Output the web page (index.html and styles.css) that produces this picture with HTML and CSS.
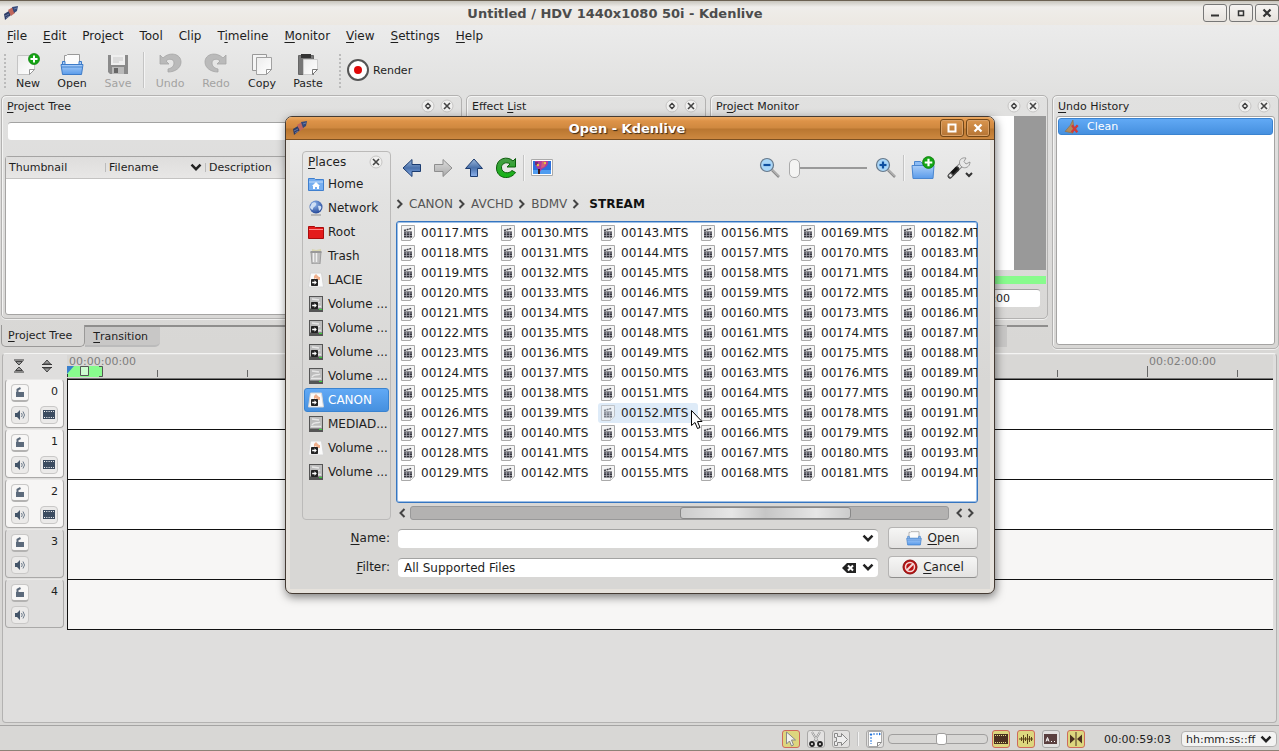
FILE: index.html
```html
<!DOCTYPE html>
<html lang="en">
<head>
    <meta charset="UTF-8">
    <meta name="viewport" content="width=device-width, initial-scale=1.0">
    <title>Untitled / HDV 1440x1080 50i - Kdenlive</title>
    <link rel="stylesheet" href="styles.css">
</head>
<body>
    <!-- shared icons -->
    <svg class="sprite" width="0" height="0" aria-hidden="true">
        <defs>
            <linearGradient id="g-blue" x1="0" y1="0" x2="0" y2="1"><stop offset="0" stop-color="#a9cdf8"/><stop offset="1" stop-color="#5a9bea"/></linearGradient>
            <linearGradient id="g-arrow" x1="0" y1="0" x2="0" y2="1"><stop offset="0" stop-color="#9cb9dc"/><stop offset="0.5" stop-color="#4a71ab"/><stop offset="1" stop-color="#8cb2ee"/></linearGradient>
            <linearGradient id="g-grey" x1="0" y1="0" x2="0" y2="1"><stop offset="0" stop-color="#dcdcdc"/><stop offset="1" stop-color="#a9a9a9"/></linearGradient>
            <linearGradient id="g-paper" x1="0" y1="0" x2="1" y2="1"><stop offset="0" stop-color="#ececec"/><stop offset="1" stop-color="#ffffff"/></linearGradient>
            <linearGradient id="g-green" x1="0" y1="0" x2="0" y2="1"><stop offset="0" stop-color="#4a9a4a"/><stop offset="1" stop-color="#12b512"/></linearGradient>
            <radialGradient id="g-globe" cx="0.4" cy="0.3" r="0.8"><stop offset="0" stop-color="#8fb6ee"/><stop offset="1" stop-color="#173a8c"/></radialGradient>
        </defs>
        <symbol id="i-app" viewBox="0 0 16 16"><path d="M1 9l5-3 2 4-6 5z" fill="#2d3c66"/><path d="M5 5l5-3 2 6-4 3z" fill="#c0675c"/><path d="M9 2l6-1-1 5-3 2z" fill="#34497a"/><path d="M2 11l4-2M3 13l3-2M11 4l3-1" stroke="#7787b0" stroke-width="0.8"/></symbol>
        <symbol id="i-plus" viewBox="0 0 12 12"><circle cx="6" cy="6" r="5.5" fill="#14a514" stroke="#0c7a0c" stroke-width="0.7"/><path d="M6 2.5v7M2.5 6h7" stroke="#fff" stroke-width="2"/></symbol>
        <symbol id="i-new" viewBox="0 0 24 24"><path d="M1.500 3.500h17v14l-5 5h-12z" fill="url(#g-paper)" stroke="#c4c4c4"/><path d="M18.500 17.500h-5v5z" fill="#fff" stroke="#999"/><use href="#i-plus" x="12" y="1" width="12" height="12"/></symbol>
        <symbol id="i-open" viewBox="0 0 24 24"><path d="M4.500 3.500h2l1-1h12v11h-15z" fill="#fbfbfb" stroke="#999"/><path d="M2.500 9.500v5h19v-5h-2.500v3h-14v-3z" fill="#a9cdf8" stroke="#3d7bc8"/><path d="M1 12.500h22l-1.500 10h-19z" fill="url(#g-blue)" stroke="#3d7bc8"/><path d="M2 15h20" stroke="#4583cf"/></symbol>
        <symbol id="i-save" viewBox="0 0 24 24"><path d="M2 3h20v19h-18l-2-2z" fill="#8a8a8a"/><rect x="5" y="3" width="14" height="10" fill="#efefef"/><path d="M7 6h10M7 8h10M7 10h6" stroke="#c9c9c9"/><rect x="6" y="15" width="12" height="7" fill="#b9b9b9"/><rect x="8" y="16" width="4" height="5" fill="#666"/></symbol>
        <symbol id="i-undo" viewBox="0 0 24 24"><path d="M2 3v9h9l-3-3c3-3 8-2 8 2 0 3-2 5-6 6v3c7 0 13-4 13-10 0-8-11-11-18-4z" fill="#bababa" stroke="#a6a6a6" stroke-width="0.8"/></symbol>
        <symbol id="i-copy" viewBox="0 0 24 24"><path d="M2.500 2.500h14v16h-14z" fill="#f4f4f4" stroke="#999"/><path d="M6.500 5.500h15v12l-5 5h-10z" fill="url(#g-paper)" stroke="#a2a2a2"/><path d="M21.500 17.500h-5v5z" fill="#fff" stroke="#999"/></symbol>
        <symbol id="i-paste" viewBox="0 0 24 24"><path d="M2.500 3.500h15v19h-15z" fill="#777" stroke="#666"/><path d="M5 2h10v4h-10z" fill="#333"/><path d="M7.500 7.500h14v10l-5 5h-9z" fill="url(#g-paper)" stroke="#ccc"/><path d="M21.500 17.500h-5v5z" fill="#fff" stroke="#777"/></symbol>
        <symbol id="i-render" viewBox="0 0 24 24"><circle cx="12" cy="12" r="10" fill="#fff" stroke="#555" stroke-width="2"/><circle cx="12" cy="12" r="4" fill="#e00808"/></symbol>
        <symbol id="i-float" viewBox="0 0 14 14"><circle cx="7" cy="7" r="6" fill="#f0f0ef" stroke="#c6c5c4"/><path d="M7 3.500l2.500 2.500h-5zM7 10.500l2.500-2.500h-5z" fill="#444"/><path d="M4.500 7l2.500-2.500 2.500 2.500-2.500 2.500z" fill="none" stroke="#444" stroke-width="1.200"/></symbol>
        <symbol id="i-close" viewBox="0 0 14 14"><circle cx="7" cy="7" r="6" fill="#f0f0ef" stroke="#c6c5c4"/><path d="M4 4l6 6M10 4l-6 6" stroke="#444" stroke-width="1.600"/></symbol>
        <symbol id="i-down" viewBox="0 0 10 8"><path d="M1 1.500l4 4 4-4" fill="none" stroke="#222" stroke-width="2.200"/></symbol>
        <symbol id="i-gt" viewBox="0 0 8 10"><path d="M1.500 1l4 4-4 4" fill="none" stroke="#444" stroke-width="2"/></symbol>
        <symbol id="i-broom" viewBox="0 0 18 16"><path d="M10 0l-3 6-6 7 9 2 1-8z" fill="#b08a5c" stroke="#8a6840" stroke-width="0.600"/><path d="M9 6l6 8M15.500 6l-7 8" stroke="#cf3a3a" stroke-width="2.600"/></symbol>
        <symbol id="i-left" viewBox="0 0 20 20"><path d="M1 10l9-8.500v5h8.500v7h-8.500v5z" fill="url(#g-arrow)" stroke="#1c3c70"/></symbol>
        <symbol id="i-right" viewBox="0 0 20 20"><path d="M19 10l-9-8.500v5h-8.500v7h8.500v5z" fill="url(#g-grey)" stroke="#8e8e8e"/></symbol>
        <symbol id="i-up" viewBox="0 0 20 20"><path d="M10 1l8.500 9.500h-5v8h-7v-8h-5z" fill="url(#g-arrow)" stroke="#1c3c70"/></symbol>
        <symbol id="i-reload" viewBox="0 0 22 22"><path d="M20.500 1.500v8.500h-8.500l3-3c-4-3-9 0-8.500 4 .5 5 7 6.500 10.500 2.500l3.500 2c-5 8-19 6.500-19-4.500 0-10 11-12.500 16.500-7z" fill="url(#g-green)" stroke="#0b5f0b"/></symbol>
        <symbol id="i-preview" viewBox="0 0 22 18"><path d="M0.500 0.500h21v16h-21z" fill="#fff" stroke="#aaa"/><path d="M2 2h18v13h-18z" fill="#2b6fdc"/><path d="M2 11h18v4h-18z" fill="#4f9cf0"/><path d="M4 2h13c1 4-2 6-6 8l-3 4-1-4c-2-2-3-4-3-8z" fill="#b03a9b"/><path d="M11 2c4 0 5 3 2 6l-3 1z" fill="#d0607a"/><path d="M4 3h3v3h-3z" fill="#6b2b78"/><circle cx="7" cy="6" r="1.200" fill="#e8c040"/><circle cx="14" cy="4" r="1.200" fill="#e8c040"/><path d="M8 10v5" stroke="#3b1a1a" stroke-width="2"/></symbol>
        <symbol id="i-lens" viewBox="0 0 22 22"><path d="M13 13l7 7" stroke="#8b8b8b" stroke-width="2.500"/><path d="M13.500 13l6.500 6.500" stroke="#ddd" stroke-width="0.800"/><circle cx="8" cy="8" r="6.500" fill="#a9d6f7" stroke="#66788a" stroke-width="1.200"/><path d="M4.500 8h7" stroke="#0e4fa0" stroke-width="2.200"/></symbol>
        <symbol id="i-zoomin" viewBox="0 0 22 22"><use href="#i-lens" width="22" height="22"/><path d="M8 4.500v7" stroke="#0e4fa0" stroke-width="2.200"/></symbol>
        <symbol id="i-newfolder" viewBox="0 0 24 24"><path d="M3.500 5.500h6l2 2h9v13h-17z" fill="#8dbcf4" stroke="#4a86cf"/><path d="M1 9.500h22l-1 13h-20z" fill="url(#g-blue)" stroke="#4a86cf"/><use href="#i-plus" x="11" y="0" width="13" height="13"/></symbol>
        <symbol id="i-wrench" viewBox="0 0 28 24"><path d="M10 14l7-7" stroke="#888" stroke-width="5"/><path d="M10.500 13.500l7-7" stroke="#e4e4e4" stroke-width="3"/><path d="M14 9c-2-5 2-8 6-7l-2 3.500 2 2.500 4-2c0 5-5 7-8 5z" fill="#e8e8e8" stroke="#888" stroke-width="0.800"/><path d="M4 20l7-7" stroke="#333" stroke-width="5" stroke-linecap="round"/><path d="M6 17l5-5" stroke="#111" stroke-width="3"/><circle cx="4.500" cy="19.500" r="2" fill="#ddd" stroke="#555"/><path d="M20 17l3 3 3-3" stroke="#333" stroke-width="2" fill="none"/></symbol>
        <symbol id="i-home" viewBox="0 0 16 16"><path d="M0.500 2.500h6l1 1h8v11h-15z" fill="#76aef0" stroke="#3f7fce"/><path d="M1 6h14" stroke="#c4ddfa"/><path d="M8 6l4 4h-1v3h-2v-2h-2v2h-2v-3h-1z" fill="#fff"/></symbol>
        <symbol id="i-globe" viewBox="0 0 16 16"><path d="M3 15h10" stroke="#aaa" stroke-width="1.500"/><circle cx="8" cy="7" r="6.500" fill="url(#g-globe)"/><path d="M4 3c3-2 5 0 4 2s-3 2-3 4-3 0-3-2zM10 6c3-1 4 1 3 3l-2 2z" fill="#cfdff5"/></symbol>
        <symbol id="i-root" viewBox="0 0 16 16"><path d="M0.500 2.500h6l1 1h8v11h-15z" fill="#e41b1b" stroke="#a90c0c"/><path d="M1 5.500h14" stroke="#ff8c8c"/></symbol>
        <symbol id="i-trash" viewBox="0 0 16 16"><path d="M3 4h10l-1 12h-8z" fill="#bdbdbd" stroke="#909090" stroke-width="0.800"/><path d="M5.500 5v9M8.500 5v9" stroke="#efefef" stroke-width="1.500"/><path d="M2.500 4h11" stroke="#999" stroke-width="2"/><path d="M4 1l4 1 5-1v2h-9z" fill="#d8d5b0"/></symbol>
        <symbol id="i-mount" viewBox="0 0 9 9"><rect width="9" height="9" rx="1" fill="#222"/><path d="M1.500 3.500h3v-2l3 3-3 3v-2h-3z" fill="#fff"/></symbol>
        <symbol id="i-usb" viewBox="0 0 16 16"><path d="M2.500 1h11l2 14h-15z" fill="#fafafa" stroke="#d6d6d6"/><path d="M8 2l3 3h1v3h-3l-1-2-2 1v-3z" fill="#f0b08c"/><use href="#i-mount" x="3" y="7" width="7" height="7"/></symbol>
        <symbol id="i-drive" viewBox="0 0 16 16"><rect x="1.500" y="0.500" width="13" height="15" fill="#bcbcbc" stroke="#555"/><path d="M4 3l7 1M4 9c2-4 5-1 8-3M3 10.500h10" stroke="#e6e6e6" stroke-width="1.500" fill="none"/><rect x="2" y="12.500" width="12" height="2.500" fill="#555"/><path d="M11 13.500h3" stroke="#39d939"/></symbol>
        <symbol id="i-mdrive" viewBox="0 0 16 16"><use href="#i-drive" width="16" height="16"/><use href="#i-mount" x="3" y="6" width="7" height="7"/></symbol>
        <symbol id="i-video" viewBox="0 0 16 16"><path d="M1.500 0.500h13v11l-4 4h-9z" fill="#f4f4f4" stroke="#aaa"/><path d="M14.500 11.500l-4 4v-3z" fill="#fff" stroke="#bbb" stroke-width="0.800"/><path d="M4 6.500h8v6h-8z" fill="#34343c"/><path d="M4 5.500l7.500-2" stroke="#44444c" stroke-width="1.500" stroke-dasharray="2 0.700"/><path d="M4 8h8M4 10.500h8M6.500 7v5.500M9.500 7v5.500" stroke="#b5b5bb" stroke-width="0.700"/></symbol>
        <symbol id="i-cancel" viewBox="0 0 16 16"><circle cx="8" cy="8" r="7" fill="#b81414" stroke="#8b0d0d"/><circle cx="8" cy="8" r="4.500" fill="none" stroke="#f4dada" stroke-width="1.500"/><path d="M5 11l6-6" stroke="#f4dada" stroke-width="1.800"/></symbol>
        <symbol id="i-clear" viewBox="0 0 14 12"><path d="M0 6l5-5h9v10h-9z" fill="#222"/><path d="M6 3.500l5 5M11 3.500l-5 5" stroke="#fff" stroke-width="2"/></symbol>
        <symbol id="i-lock" viewBox="0 0 12 12"><path d="M2 6h8v5h-8z" fill="#5d6b7c"/><path d="M3.500 6v-2.500l3-1.500" fill="none" stroke="#5d6b7c" stroke-width="2"/></symbol>
        <symbol id="i-sound" viewBox="0 0 12 12"><path d="M1 4h2l3-3v10l-3-3h-2z" fill="#435468"/><path d="M7.500 4q1.500 2 0 4M9 2.500q3 3.500 0 7" fill="none" stroke="#6d7b8b"/></symbol>
        <symbol id="i-film" viewBox="0 0 12 9"><rect width="12" height="9" fill="#3c4c60"/><path d="M1 1.500h10M1 7.500h10" stroke="#fff" stroke-dasharray="1 1.300"/></symbol>
    </svg>

    <div class="window">
        <header class="titlebar">
            <svg class="ic16"><use href="#i-app"/></svg>
            <h1>Untitled / HDV 1440x1080 50i - Kdenlive</h1>
            <div class="win-buttons">
                <button aria-label="Minimize"><svg width="10" height="10"><path d="M1 7.500h8" stroke="#333" stroke-width="2"/></svg></button>
                <button aria-label="Maximize"><svg width="10" height="10"><path d="M2.500 3h5v4.500h-5z" fill="none" stroke="#333" stroke-width="1.500"/></svg></button>
                <button aria-label="Close"><svg width="10" height="10"><path d="M1.500 1.500l7 7M8.500 1.500l-7 7" stroke="#333" stroke-width="2.200"/></svg></button>
            </div>
        </header>

        <nav class="menubar">
            <button><u>F</u>ile</button>
            <button><u>E</u>dit</button>
            <button>Pro<u>j</u>ect</button>
            <button>Tool</button>
            <button>Clip</button>
            <button>T<u>i</u>meline</button>
            <button><u>M</u>onitor</button>
            <button><u>V</u>iew</button>
            <button><u>S</u>ettings</button>
            <button><u>H</u>elp</button>
        </nav>

        <div class="toolbar">
            <span class="grip"></span>
            <button class="tool narrow"><svg><use href="#i-new"/></svg>New</button>
            <button class="tool"><svg><use href="#i-open"/></svg>Open</button>
            <button class="tool" disabled><svg><use href="#i-save"/></svg>Save</button>
            <span class="sep"></span>
            <button class="tool" disabled><svg><use href="#i-undo"/></svg>Undo</button>
            <button class="tool" disabled><svg class="flip"><use href="#i-undo"/></svg>Redo</button>
            <button class="tool"><svg><use href="#i-copy"/></svg>Copy</button>
            <button class="tool"><svg><use href="#i-paste"/></svg>Paste</button>
            <span class="grip"></span>
            <button class="tool-render"><svg><use href="#i-render"/></svg>Render</button>
        </div>

        <main class="docks">
            <div class="dock-area">
                <div class="dock-row">
                    <section class="dock tree-dock">
                        <div class="dock-title"><h2><u>P</u>roject Tree</h2><button aria-label="Float"><svg><use href="#i-float"/></svg></button><button aria-label="Close"><svg><use href="#i-close"/></svg></button></div>
                        <input class="search" type="text" aria-label="Search clips">
                        <div class="tree">
                            <table>
                                <thead>
                                    <tr><th>Thumbnail</th><th>Filename <svg width="12" height="9"><use href="#i-down"/></svg></th><th>Description</th></tr>
                                </thead>
                            </table>
                        </div>
                    </section>
                    <section class="dock effect-dock">
                        <div class="dock-title"><h2>Effect <u>L</u>ist</h2><button aria-label="Float"><svg><use href="#i-float"/></svg></button><button aria-label="Close"><svg><use href="#i-close"/></svg></button></div>
                    </section>
                    <section class="dock monitor-dock">
                        <div class="dock-title"><h2>Pr<u>o</u>ject Monitor</h2><button aria-label="Float"><svg><use href="#i-float"/></svg></button><button aria-label="Close"><svg><use href="#i-close"/></svg></button></div>
                        <div class="screen"></div>
                        <div class="zone"></div>
                        <input class="timecode" type="text" value="00:00:00:00" aria-label="Position">
                    </section>
                </div>
                <div class="tabs">
                    <button class="tab active"><u>P</u>roject Tree</button>
                    <button class="tab"><u>T</u>ransition</button>
                    <span class="tab-rest"></span>
                    <span class="tab-end"></span>
                </div>
            </div>
            <section class="dock undo-dock">
                <div class="dock-title"><h2><u>U</u>ndo History</h2><button aria-label="Float"><svg><use href="#i-float"/></svg></button><button aria-label="Close"><svg><use href="#i-close"/></svg></button></div>
                <ul class="history">
                    <li><svg width="18" height="14"><use href="#i-broom"/></svg>Clean</li>
                </ul>
            </section>
        </main>

        <section class="timeline">
            <div class="heads">
                <div class="sizers">
                    <button aria-label="Shrink tracks"><svg width="12" height="14"><path d="M1 1h10M1 13h10" stroke="#333"/><path d="M2.500 2.500h7l-3.500 3.500zM2.500 11.500h7l-3.500-3.500z" fill="#999" stroke="#444"/></svg></button>
                    <button aria-label="Grow tracks"><svg width="12" height="14"><path d="M1 5.500h10M1 8.500h10" stroke="#333"/><path d="M2.500 5h7l-3.500-4zM2.500 9h7l-3.500 4z" fill="#999" stroke="#444"/></svg></button>
                </div>
                <div id="heads"></div>
            </div>
            <div class="lanes">
                <div class="ruler">
                    <div class="ruler-labels"><span>00:00:00:00</span><span>00:02:00:00</span></div>
                    <div class="ticks">
                        <svg width="36" height="11"><path d="M0 0h36v11h-36z" fill="#88fb8d"/><path d="M0 0h7l-7 8z" fill="#3a80cc"/><path d="M0.500 8v3" stroke="#333"/><path d="M13.500 0.500h8v9h-8z" fill="#cdfcd0" stroke="#555"/><path d="M32 0.500h3.500v10h-3.500" fill="none" stroke="#555"/></svg>
                        <span class="long-tick"></span>
                    </div>
                </div>
                <div id="lanes"></div>
            </div>
        </section>

        <footer class="statusbar">
            <button class="mode on" aria-label="Selection tool"><svg width="14" height="16"><path d="M2.500 1v12l3-3 2 5 2-1-2-5h4z" fill="#f2f2ec" stroke="#888"/></svg></button>
            <button class="mode" aria-label="Razor tool"><svg width="16" height="16"><path d="M4 1l6 10M12 1l-6 10" stroke="#888" stroke-width="2"/><path d="M4 1l6 10M12 1l-6 10" stroke="#f4f4f4" stroke-width="0.800"/><circle cx="4" cy="13" r="2" fill="none" stroke="#222" stroke-width="1.800"/><circle cx="12" cy="13" r="2" fill="none" stroke="#222" stroke-width="1.800"/></svg></button>
            <button class="mode" aria-label="Spacer tool"><svg width="16" height="16"><path d="M1.500 2.500h3v3h4v-3l6 6-6 6v-3h-4v3h-3v-4h2v-4h-2z" fill="#eee" stroke="#888"/></svg></button>
            <span class="sep"></span>
            <button class="mode" aria-label="Fit zoom"><svg width="16" height="16"><path d="M1.500 0.500h13v11l-4 4h-9z" fill="#fff" stroke="#aaa"/><path d="M14.500 11.500h-4v4" fill="none" stroke="#888"/><path d="M4 3v10M6 3h7" stroke="#1d6fd8" stroke-dasharray="2 1"/><path d="M2.500 4l1.500-2 1.500 2zM12 1.500l2 1.500-2 1.500z" fill="#1d6fd8"/></svg></button>
            <input class="zoom" type="range" min="0" max="13" value="7" aria-label="Timeline zoom">
            <button class="mode on" aria-label="Show video thumbnails"><svg width="14" height="10"><rect width="14" height="10" fill="#4a3020"/><path d="M1 1.500h12M1 8.500h12" stroke="#e3dc86" stroke-dasharray="1 1"/></svg></button>
            <button class="mode on" aria-label="Show audio thumbnails"><svg width="14" height="12"><path d="M0 6h14M2.500 4v4M4.500 2v8M6.500 4v4M8.500 1v10M10.500 3v6M12.500 4v4" stroke="#5a4018"/></svg></button>
            <button class="mode" aria-label="Show markers"><svg width="13" height="10"><rect width="13" height="10" fill="#5a4040"/><path d="M2 7.500l1.500-4 1.500 4M2.500 6h2M7 7.500h1M10 7.500h1" stroke="#fff" fill="none"/></svg></button>
            <button class="mode on" aria-label="Snap"><svg width="14" height="14"><path d="M7 0v14" stroke="#4a3020"/><path d="M1 2.500l5 4.500-5 4.500zM13 2.500l-5 4.500 5 4.500z" fill="#4a3020"/></svg></button>
            <span class="duration">00:00:59:03</span>
            <span class="pick format"><select aria-label="Timecode format"><option>hh:mm:ss::ff</option></select><svg width="12" height="9"><use href="#i-down"/></svg></span>
        </footer>
    </div>

    <div class="dialog" role="dialog" aria-labelledby="dialog-title">
        <div class="dialog-bar">
            <svg class="ic16"><use href="#i-app"/></svg>
            <h2 id="dialog-title">Open - Kdenlive</h2>
            <div class="win-buttons">
                <button aria-label="Maximize"><svg width="12" height="10"><path d="M2.500 1.500h7v7h-7z" fill="none" stroke="#fff" stroke-width="2"/></svg></button>
                <button aria-label="Close"><svg width="10" height="10"><path d="M1.500 1.500l7 7M8.500 1.500l-7 7" stroke="#fff" stroke-width="2.200"/></svg></button>
            </div>
        </div>
        <div class="dialog-body">
            <div class="browser">
                <aside class="places">
                    <div class="places-title"><h3><u>P</u>laces</h3><button aria-label="Close"><svg><use href="#i-close"/></svg></button></div>
                    <ul>
                        <li><svg><use href="#i-home"/></svg>Home</li>
                        <li><svg><use href="#i-globe"/></svg>Network</li>
                        <li><svg><use href="#i-root"/></svg>Root</li>
                        <li><svg><use href="#i-trash"/></svg>Trash</li>
                        <li><svg><use href="#i-usb"/></svg>LACIE</li>
                        <li><svg><use href="#i-mdrive"/></svg>Volume ...</li>
                        <li><svg><use href="#i-mdrive"/></svg>Volume ...</li>
                        <li><svg><use href="#i-mdrive"/></svg>Volume ...</li>
                        <li><svg><use href="#i-drive"/></svg>Volume ...</li>
                        <li class="selected"><svg><use href="#i-usb"/></svg>CANON</li>
                        <li><svg><use href="#i-drive"/></svg>MEDIAD...</li>
                        <li><svg><use href="#i-usb"/></svg>Volume ...</li>
                        <li><svg><use href="#i-mdrive"/></svg>Volume ...</li>
                    </ul>
                </aside>
                <div class="pane">
                    <div class="nav">
                        <button aria-label="Back"><svg width="20" height="20"><use href="#i-left"/></svg></button>
                        <button aria-label="Forward" disabled><svg width="20" height="20"><use href="#i-right"/></svg></button>
                        <button aria-label="Parent folder"><svg width="20" height="20"><use href="#i-up"/></svg></button>
                        <button aria-label="Reload"><svg width="22" height="22"><use href="#i-reload"/></svg></button>
                        <span class="sep"></span>
                        <button aria-label="Show preview"><svg width="22" height="18"><use href="#i-preview"/></svg></button>
                        <span class="fill"></span>
                        <button aria-label="Zoom out"><svg width="22" height="22"><use href="#i-lens"/></svg></button>
                        <input class="icon-size" type="range" value="0" aria-label="Icon size">
                        <button aria-label="Zoom in"><svg width="22" height="22"><use href="#i-zoomin"/></svg></button>
                        <span class="sep"></span>
                        <button aria-label="New folder"><svg width="24" height="24"><use href="#i-newfolder"/></svg></button>
                        <button aria-label="Options"><svg width="28" height="24"><use href="#i-wrench"/></svg></button>
                    </div>
                    <nav class="crumbs">
                        <svg><use href="#i-gt"/></svg><a href="#">CANON</a>
                        <svg><use href="#i-gt"/></svg><a href="#">AVCHD</a>
                        <svg><use href="#i-gt"/></svg><a href="#">BDMV</a>
                        <svg><use href="#i-gt"/></svg><a href="#" class="current">STREAM</a>
                    </nav>
                    <ul class="files" id="files"></ul>
                    <div class="scrollbar">
                        <button aria-label="Scroll left"><svg class="flip"><use href="#i-gt"/></svg></button>
                        <div class="track"><div class="thumb"></div></div>
                        <button aria-label="Scroll left"><svg class="flip"><use href="#i-gt"/></svg></button>
                        <button aria-label="Scroll right"><svg><use href="#i-gt"/></svg></button>
                    </div>
                </div>
            </div>
            <form class="fields">
                <label for="name"><u>N</u>ame:</label>
                <span class="pick"><input id="name" type="text"><svg width="12" height="9"><use href="#i-down"/></svg></span>
                <button type="button" class="push"><svg><use href="#i-open"/></svg><span><u>O</u>pen</span></button>
                <label for="filter"><u>F</u>ilter:</label>
                <span class="pick"><select id="filter"><option>All Supported Files</option></select><svg width="14" height="12"><use href="#i-clear"/></svg><svg width="12" height="9"><use href="#i-down"/></svg></span>
                <button type="button" class="push"><svg><use href="#i-cancel"/></svg><span><u>C</u>ancel</span></button>
            </form>
        </div>
        <svg class="pointer" width="14" height="22"><path d="M1.500 1.500v15l3.500-3 2.500 6 2.500-1-2.500-6h4.500z" fill="#fff" stroke="#000"/></svg>
    </div>

    <script>
        // clips on the card
        var files = document.getElementById('files');
        for (var i = 117; i <= 194; i++) {
            var li = document.createElement('li');
            if (i === 152) {
                li.className = 'hover';
            }
            li.innerHTML = '<svg><use href="#i-video"/></svg>00' + i + '.MTS';
            files.appendChild(li);
        }

        // tracks 0-2 are video, 3-4 are audio
        var heads = document.getElementById('heads');
        var lanes = document.getElementById('lanes');
        for (var t = 0; t < 5; t++) {
            var video = t < 3;
            heads.innerHTML += '<div class="head' + (video ? '' : ' audio') + '">' +
                '<button class="lock" aria-label="Lock track"><svg width="12" height="12"><use href="#i-lock"/></svg></button>' +
                '<span>' + t + '</span>' +
                '<button aria-label="Mute track"><svg width="12" height="12"><use href="#i-sound"/></svg></button>' +
                (video ? '<button aria-label="Hide track"><svg width="12" height="9"><use href="#i-film"/></svg></button>' : '') +
                '</div>';
            lanes.innerHTML += '<div class="lane' + (video ? '' : ' audio') + '"></div>';
        }
    </script>
</body>
</html>
```

FILE: styles.css
```css
* {
    box-sizing: border-box;
}

body {
    margin: 0;
    font-family: "DejaVu Sans", sans-serif;
    font-size: 12px;
    color: #1e1e1e;
    background-color: #d8d7d5;
}

h1, h2, h3, ul {
    margin: 0;
    padding: 0;
    font-size: 11px;
    font-weight: normal;
    list-style: none;
}

button, input, select {
    font: inherit;
    color: inherit;
    margin: 0;
    padding: 0;
    border: 0;
    background: none;
}

button {
    display: flex;
    align-items: center;
    justify-content: center;
}

svg {
    display: block;
    flex: none;
}

u {
    text-decoration: underline;
    text-underline-offset: 2px;
}

.sprite {
    position: absolute;
}

.flip {
    transform: scaleX(-1);
}

.ic16 {
    width: 16px;
    height: 16px;
}

.sep {
    width: 2px;
    align-self: stretch;
    background: linear-gradient(90deg, #c4c4c4 50%, #f4f4f4 50%);
}

/* main window */
.window {
    display: flex;
    flex-direction: column;
    min-height: 100vh;
    border-top: 1px solid #6b6152;
    border-bottom: 1px solid #8d8277;
    background: linear-gradient(#ececec 20px, #e1e1e0 90px, #dcdbda 240px, #d8d7d5 340px);
}

.titlebar {
    display: flex;
    align-items: center;
    height: 24px;
    padding: 0 0 0 3px;
    background: linear-gradient(#c8c5bd, #efedea 6px, #ece8e2);
}

.titlebar h1, .dialog-bar h2 {
    flex: 1;
    text-align: center;
    font-size: 13px;
    font-weight: bold;
}

.titlebar h1 {
    padding-left: 8px;
    color: #4c4c4c;
}

.win-buttons {
    display: flex;
    gap: 2px;
}

.win-buttons button {
    width: 24px;
    height: 18px;
    border: 1px solid #777;
    border-radius: 3px;
    background: linear-gradient(#f6f4f2, #e6e2dd);
}

.menubar {
    display: flex;
    gap: 16px;
    height: 22px;
    padding-left: 7px;
}

.menubar button {
    display: block;
}

.toolbar {
    display: flex;
    height: 48px;
    padding: 5px 0 7px 3px;
}

.toolbar .sep {
    margin: 0 2px;
}

.grip {
    width: 4px;
    margin-top: 1px;
    background-image: radial-gradient(#bbb 1px, transparent 1px);
    background-size: 4px 4px;
}

.tool {
    flex-direction: column;
    justify-content: flex-start;
    width: 46px;
    font-size: 11px;
    line-height: 16px;
}

.tool.narrow {
    width: 42px;
}

.tool svg, .tool-render svg {
    width: 24px;
    height: 24px;
}

.tool:disabled {
    color: #a3a2a1;
}

.toolbar .grip + .tool-render {
    gap: 3px;
    margin-left: 4px;
    font-size: 11px;
}

.tool + .grip {
    margin-left: 7px;
}

/* docks */
.docks {
    display: flex;
    gap: 4px;
    height: 254px;
    padding-left: 1px;
}

.dock-area {
    flex: 1;
    display: flex;
    flex-direction: column;
}

.dock-row {
    flex: 1;
    display: flex;
    gap: 4px;
}

.dock {
    display: flex;
    flex-direction: column;
    padding: 0 3px;
    border: 1px solid #b3b2b1;
    border-radius: 5px;
    box-shadow: inset 1px 1px 0 #f4f4f3, 0 1px 0 #f0f0ef;
}

.tree-dock {
    flex: 1;
}

.effect-dock {
    width: 240px;
}

.monitor-dock {
    width: 338px;
    padding: 0 1px;
}

.undo-dock {
    width: 227px;
}

.dock-title {
    display: flex;
    align-items: center;
    gap: 5px;
    height: 20px;
    padding: 0 4px 0 2px;
}

.monitor-dock .dock-title {
    padding: 0 6px 0 4px;
}

.dock-title h2 {
    flex: 1;
}

.dock-title svg, .places-title svg {
    width: 14px;
    height: 14px;
}

.search, .timecode {
    height: 18px;
    border-top: 1px solid #a3a3a2;
    border-radius: 3px;
    background-color: #fff;
}

.search {
    margin: 6px 4px 16px 3px;
}

.tree {
    flex: 1;
    margin-bottom: 3px;
    border: 1px solid #a5a4a3;
    border-radius: 3px;
    background-color: #fff;
}

.tree table {
    width: 100%;
    table-layout: fixed;
    border-collapse: collapse;
    background: linear-gradient(#dedddc, #e8e7e6);
}

.tree th {
    height: 21px;
    padding: 0 4px 0 3px;
    text-align: left;
    font-size: 11px;
    font-weight: normal;
    border-bottom: 1px solid #c4c3c2;
}

.tree th:not(:last-child) {
    width: 100px;
    background: linear-gradient(transparent 6px, #bbb 6px, #bbb 15px, transparent 15px) right / 1px 100% no-repeat;
}

.tree th svg {
    float: right;
    margin-top: 2px;
}

.screen {
    flex: 1;
    border: solid #999;
    border-width: 0 32px;
    background-color: #fff;
}

.zone {
    height: 8px;
    margin-top: 6px;
    background-color: #88fb8d;
}

.timecode {
    align-self: flex-end;
    width: 103px;
    margin: 5px 6px 11px 0;
    padding-left: 6px;
    font-size: 11px;
}

.tabs {
    display: flex;
    height: 30px;
    padding: 6px 0 2px;
}

.tab {
    padding: 0 12px 0 8px;
    font-size: 11px;
    border-top: 2px solid #8f8e8d;
    border-bottom: 2px solid #bbb;
    border-radius: 0 0 5px 0;
    background-color: #c8c7c6;
}

.tab.active {
    padding: 0 12px 0 6px;
    border: solid #9a9998;
    border-width: 0 1px 1px;
    border-radius: 0 0 5px 5px;
    background: none;
}

.tab-rest {
    flex: 1;
    border-top: 2px solid #8f8e8d;
    border-right: 22px solid #c8c7c6;
}

.tab-end {
    width: 41px;
    border-top: 2px solid #8f8e8d;
}

.history {
    flex: 1;
    margin-bottom: 3px;
    padding: 1px;
    border: 1px solid #a5a4a3;
    border-radius: 3px;
    background-color: #fff;
}

.history li {
    display: flex;
    align-items: center;
    gap: 6px;
    height: 17px;
    padding-left: 4px;
    font-size: 11px;
}

.history li, .places .selected {
    color: #fff;
    border: 1px solid #3a83d0;
    border-radius: 3px;
    background: linear-gradient(#61a9f5, #4690df);
}

/* timeline */
.timeline {
    flex: 1;
    display: flex;
    gap: 3px;
    margin: 4px 2px 2px;
    padding: 1px 3px 3px 2px;
    border: 1px solid #b3b2b1;
    border-top-color: #f4f4f3;
    border-radius: 4px;
    background-color: #dfdedd;
}

.heads {
    flex: none;
    width: 59px;
}

.sizers {
    display: flex;
    gap: 16px;
    height: 24px;
    padding: 0 0 2px 8px;
}

.head {
    display: grid;
    grid-template-columns: 18px 1fr 18px;
    grid-template-rows: 18px 18px;
    gap: 4px 0;
    align-content: center;
    height: 49px;
    margin-bottom: 1px;
    padding: 0 5px;
    border: 1px solid #aaa9a8;
    border-top-color: #e9e8e7;
    border-radius: 4px;
    background-color: #f6f5f4;
}

.head.audio {
    background-color: #dfdedd;
}

.head span {
    grid-column: 2 / 4;
    padding-top: 1px;
    text-align: right;
    font-size: 11px;
}

.head button {
    border: 1px solid #c9c8c7;
    border-radius: 4px;
    background-color: #ebeae9;
}

.head .lock {
    border-bottom: 2px solid #b3b2b1;
    background-color: #f8f7f6;
}

.head button:nth-child(4) {
    grid-column: 3;
}

.lanes {
    flex: 1;
    min-width: 0;
}

.ruler {
    height: 23px;
    overflow: hidden;
    color: #7f7e7d;
    font-size: 11px;
    background-color: #d8d7d5;
}

.ruler-labels {
    display: flex;
    height: 11px;
    line-height: 13px;
    padding-left: 2px;
}

.ruler-labels span {
    width: 1080px;
    flex: none;
}

.ticks {
    display: flex;
    height: 11px;
    background: repeating-linear-gradient(90deg, #666 0, #666 1px, transparent 1px, transparent 90px) 0 4px no-repeat;
}

.long-tick {
    width: 1px;
    margin-left: 1044px;
    background-color: #666;
}

#lanes {
    border-top: 1px solid #777;
    border-left: 1px solid #111;
}

.lane {
    height: 50px;
    border-bottom: 1px solid #111;
    background-color: #fff;
}

.lane:first-child {
    height: 51px;
    border-top: 1px solid #111;
}

.lane.audio {
    background-color: #f7f6f5;
}

/* status bar */
.statusbar {
    display: flex;
    align-items: center;
    justify-content: flex-end;
    gap: 7px;
    height: 25px;
    padding: 2px 2px 0 0;
    border-top: 1px solid #a5a4a3;
}

.mode {
    width: 18px;
    height: 18px;
    border: 1px solid #a9a8a7;
    border-radius: 3px;
    background-color: #e3e2e1;
}

.mode.on {
    border-color: #cf6a5c;
    background-color: #ddd67e;
}

.statusbar .sep {
    margin: 4px 0;
}

input[type="range"] {
    appearance: none;
}

.zoom {
    width: 100px;
    height: 10px;
    border: 1px solid #a09f9e;
    border-radius: 4px;
    margin: 0 -3px;
}

.zoom::-webkit-slider-thumb {
    appearance: none;
    width: 11px;
    height: 12px;
    border: 1px solid #a09f9e;
    border-radius: 3px;
    background-color: #fff;
}

.duration {
    margin: 0 3px 0 12px;
    font-size: 11px;
}

.pick {
    display: flex;
    align-items: center;
    gap: 6px;
    height: 19px;
    padding: 0 4px 0 6px;
    border-top: 1px solid #a3a3a2;
    border-radius: 4px;
    background-color: #fff;
}

.pick input, .pick select {
    flex: 1;
    min-width: 0;
    appearance: none;
    outline: 0;
}

.pick.format {
    height: 16px;
    gap: 4px;
    padding-left: 4px;
    font-size: 11px;
    border: 1px solid #b3b2b1;
    background-color: #f3f3f2;
}

/* open dialog */
.dialog {
    position: absolute;
    top: 116px;
    left: 285px;
    width: 710px;
    border: 1px solid #453b33;
    border-radius: 7px;
    background-color: #e6e2dc;
    box-shadow: 1px 3px 10px rgba(0, 0, 0, 0.5);
}

.dialog-bar {
    display: flex;
    align-items: center;
    height: 23px;
    padding: 0 4px 0 6px;
    color: #fff;
    text-shadow: 1px 1px 1px #3c2a18;
    border-bottom: 1px solid #7c5022;
    border-radius: 6px 6px 0 0;
    background: linear-gradient(#ecaa64, #dd9348 4px, #cf883f 11px, #b97630 12px, #cd8840);
}

.dialog-bar h2 {
    padding-left: 6px;
}

.dialog-bar .win-buttons button {
    border-color: #744818;
    background: linear-gradient(#d9954e, #b57434);
    box-shadow: inset 0 0 0 1px #d9a066;
}

.dialog-body {
    margin: 0 4px 4px;
    padding: 11px 12px;
    background: linear-gradient(#ebebeb, #e2e2e1 60px, #d8d7d5 240px);
}

.browser {
    display: flex;
    gap: 5px;
}

.places {
    width: 89px;
    padding: 0 1px;
    border: 1px solid #bbbab9;
    border-radius: 4px;
}

.places-title {
    display: flex;
    align-items: center;
    justify-content: space-between;
    height: 20px;
    padding: 0 6px 0 4px;
}

.places h3, .places ul {
    font-size: 12px;
}

.places li {
    display: flex;
    align-items: center;
    gap: 4px;
    height: 24px;
    padding-left: 4px;
    white-space: nowrap;
}

.places li svg {
    width: 16px;
    height: 16px;
}

.places .selected {
    padding-left: 3px;
}

.pane {
    flex: 1;
    min-width: 0;
}

.nav {
    display: flex;
    align-items: center;
    gap: 11px;
    height: 34px;
    padding: 0 4px 0 6px;
}

.nav .sep {
    margin: 4px -5px;
}

.fill {
    flex: 1;
}

.icon-size {
    width: 78px;
    height: 20px;
    margin: 0 -3px;
    background: linear-gradient(#999, #999) center / 100% 2px no-repeat;
}

.icon-size::-webkit-slider-thumb {
    appearance: none;
    width: 11px;
    height: 19px;
    border: 1px solid #aaa;
    border-radius: 5px;
    background-color: #f4f4f3;
}

.crumbs {
    display: flex;
    align-items: center;
    gap: 5px;
    height: 36px;
    padding-top: 1px;
}

.crumbs svg, .scrollbar svg {
    width: 8px;
    height: 10px;
}

.crumbs a {
    color: #555;
    text-decoration: none;
}

.crumbs .current {
    margin-left: 4px;
    color: #111;
    font-weight: bold;
}

.files {
    display: grid;
    grid-auto-flow: column;
    grid-template-rows: repeat(13, 20px);
    grid-auto-columns: 100px;
    height: 282px;
    padding: 1px;
    overflow: hidden;
    border: 1px solid #3575c0;
    border-radius: 3px;
    background-color: #fff;
    box-shadow: inset 0 0 0 1px #9dbfe6;
}

.files li {
    display: flex;
    align-items: center;
    gap: 5px;
    padding-left: 2px;
    font-size: 12px;
}

.files svg {
    width: 16px;
    height: 16px;
}

.files .hover {
    border-radius: 3px;
    background-color: #deebf8;
}

.files .hover svg {
    opacity: 0.6;
}

.scrollbar {
    display: flex;
    align-items: center;
    gap: 4px;
    height: 14px;
    margin: 3px 3px 0 2px;
}

.scrollbar .track {
    flex: 1;
    height: 14px;
    border: 1px solid #999;
    border-radius: 3px;
    background-color: #b3b2b1;
}

.scrollbar .track + button {
    margin-left: 2px;
}

.thumb {
    width: 32%;
    height: 12px;
    margin-left: 50%;
    border: 1px solid #888;
    border-radius: 3px;
    background: linear-gradient(90deg, #ccc, #e6e6e6 30%, #c6c6c6 50%, #e6e6e6 80%, #ccc);
}

.fields {
    display: grid;
    grid-template-columns: 88px 1fr 90px;
    align-items: center;
    gap: 7px 10px;
    margin-top: 7px;
}

.fields label {
    text-align: right;
}

.fields .pick {
    margin-left: -2px;
}

.push {
    gap: 5px;
    height: 22px;
    border: 1px solid #b5b4b3;
    border-bottom-color: #8f8e8d;
    border-radius: 4px;
    background: linear-gradient(#f6f6f5, #e4e3e2);
}

.push svg {
    width: 16px;
    height: 16px;
}

.pointer {
    position: absolute;
    top: 292px;
    left: 404px;
}
```
